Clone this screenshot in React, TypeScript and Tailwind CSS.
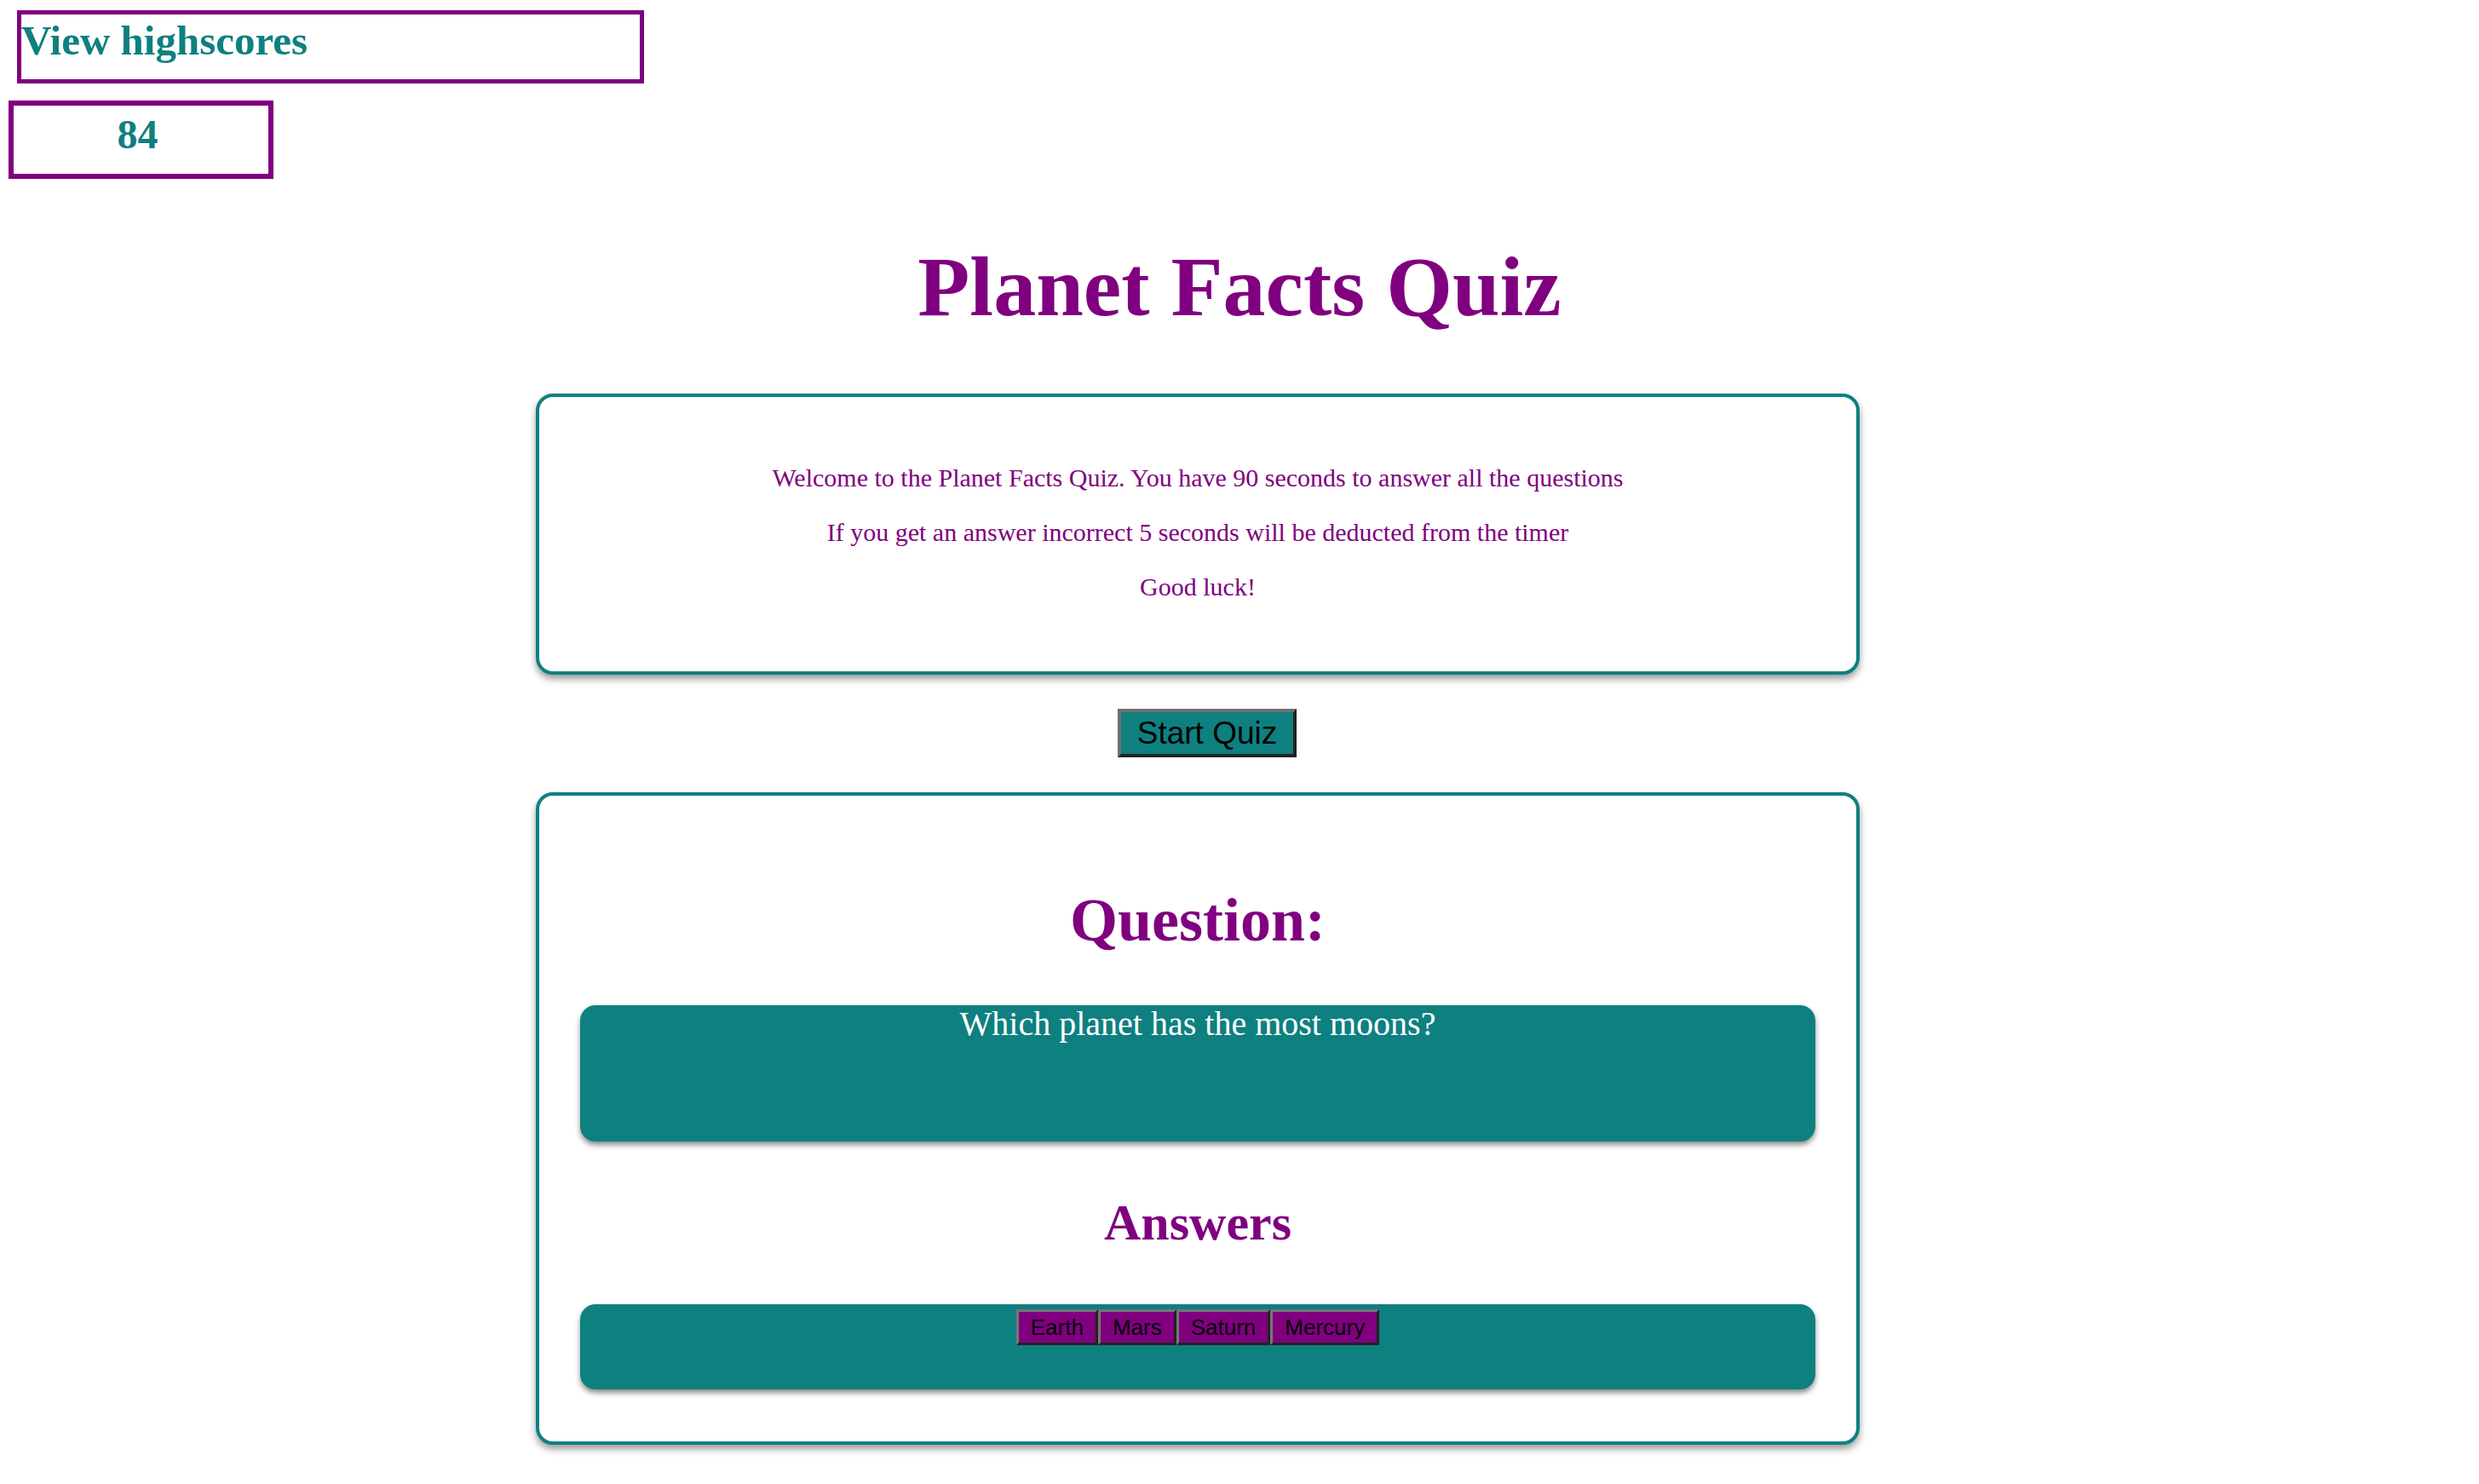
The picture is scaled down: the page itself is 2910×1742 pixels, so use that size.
import React from "react";

const serif = { fontFamily: '"Liberation Serif", "Times New Roman", serif' };
const sans = { fontFamily: '"Liberation Sans", Arial, sans-serif' };

const answers = ["Earth", "Mars", "Saturn", "Mercury"];

function AnswerButton({ label }: { label: string }) {
    return (
        <button
            style={sans}
            className="h-[42px] px-[14px] text-[26px] leading-[30px] text-black bg-[#800080] border-[3px] border-t-[#767676] border-l-[#767676] border-b-[#222] border-r-[#222]"
        >
            {label}
        </button>
    );
}

export default function App() {
    return (
        <div className="min-h-[1742px] w-[2910px] bg-white" style={serif}>
            <header className="pt-[12px]">
                <div className="ml-[20px] w-[736px] h-[86px] border-[5px] border-[#800080] pt-[4px]">
                    <p className="text-[49px] leading-[53px] font-bold text-[#0e8080]">View highscores</p>
                </div>
                <div className="mt-[20px] ml-[10px] w-[311px] h-[92px] border-[6px] border-[#800080] pt-[7px]">
                    <p className="text-center text-[48px] leading-[53px] font-bold text-[#0e8080] -translate-x-[4px]">84</p>
                </div>
            </header>

            <h1 className="mt-[71px] mb-[70px] text-center text-[100px] leading-[111px] font-bold text-[#800080]">
                Planet Facts Quiz
            </h1>

            <section className="ml-[629px] w-[1554px] h-[330px] rounded-[20px] border-4 border-[#0e8080] bg-white shadow-[0_5px_8px_rgba(0,0,0,0.4)] pt-[48px] text-center text-[30px] leading-[34px] text-[#800080]">
                <p className="my-[30px]">Welcome to the Planet Facts Quiz. You have 90 seconds to answer all the questions</p>
                <p className="my-[30px]">If you get an answer incorrect 5 seconds will be deducted from the timer</p>
                <p className="my-[30px]">Good luck!</p>
            </section>

            <div className="ml-[1312px] mt-[40px]">
                <button
                    style={sans}
                    className="h-[57px] w-[210px] text-[37px] leading-[42px] text-black bg-[#0e8080] border-4 border-t-[#6f6f6f] border-l-[#6f6f6f] border-b-[#222] border-r-[#222]"
                >
                    Start Quiz
                </button>
            </div>

            <section className="mt-[41px] mb-[45px] ml-[629px] w-[1554px] rounded-[20px] border-4 border-[#0e8080] bg-white shadow-[0_5px_8px_rgba(0,0,0,0.4)] pt-[46px] pb-[61px] px-[48px]">
                <h2 className="my-[60px] text-center text-[72px] leading-[80px] font-bold text-[#800080]">Question:</h2>
                <div className="h-[160px] rounded-[18px] bg-[#0e8080] shadow-[0_4px_6px_rgba(0,0,0,0.45)]">
                    <p className="text-center text-[40px] leading-[44px] text-white">Which planet has the most moons?</p>
                </div>
                <h3 className="mt-[62px] mb-[63px] text-center text-[60px] leading-[66px] font-bold text-[#800080]">Answers</h3>
                <div className="h-[100px] rounded-[18px] bg-[#0e8080] shadow-[0_4px_6px_rgba(0,0,0,0.45)] pt-[6px] flex justify-center items-start">
                    {answers.map((a) => (
                        <AnswerButton key={a} label={a} />
                    ))}
                </div>
            </section>
        </div>
    );
}
